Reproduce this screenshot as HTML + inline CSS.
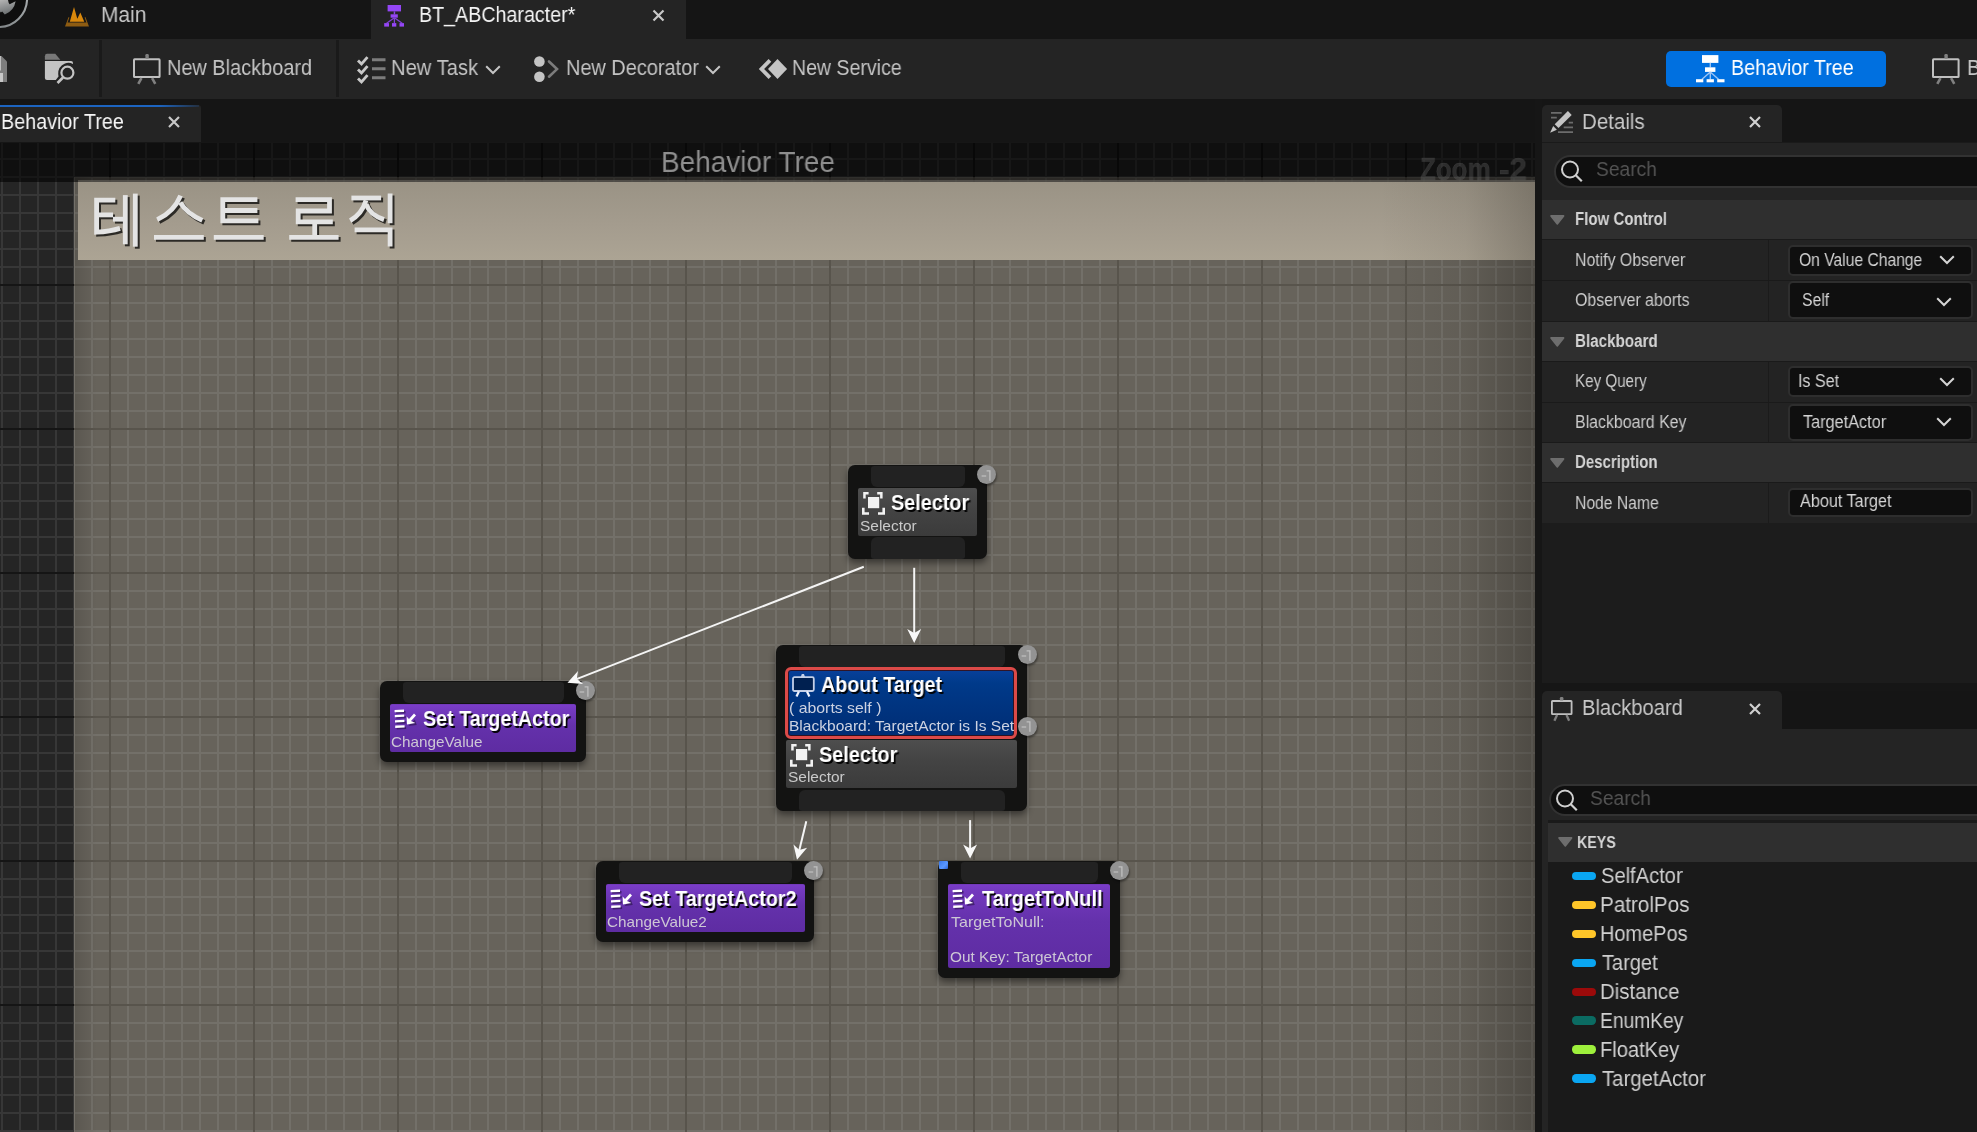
<!DOCTYPE html>
<html><head><meta charset="utf-8"><title>BT_ABCharacter</title>
<style>
html,body{margin:0;padding:0;width:1977px;height:1132px;overflow:hidden;background:#151515;font-family:"Liberation Sans",sans-serif;}
div,svg{font-family:"Liberation Sans",sans-serif;}
</style></head><body>
<div style="position:relative;width:1977px;height:1132px;overflow:hidden;">
<div style="position:absolute;left:0px;top:0px;width:1977px;height:39px;background:#151515;"></div>
<svg style="position:absolute;left:0px;top:0px;" width="40" height="39" viewBox="0 0 40 39">
<defs><linearGradient id="uel" x1="0" y1="0" x2="0.3" y2="1"><stop offset="0" stop-color="#b4b4b4"/><stop offset="1" stop-color="#6c7072"/></linearGradient>
<linearGradient id="uer" x1="1" y1="0" x2="0" y2="1"><stop offset="0" stop-color="#b8bcbe"/><stop offset="1" stop-color="#6e7476"/></linearGradient></defs>
<circle cx="-1.5" cy="-1.5" r="28.6" fill="#0e0e0e" stroke="url(#uer)" stroke-width="2.1"/>
<path d="M0 0 H8 Q8.6 3.6 9.6 4.2 L15.6 1.2 Q14.2 10.5 4.8 14.6 L2.2 11.4 L0.8 12.6 L0 11.6 Z" fill="url(#uel)"/>
</svg>
<svg style="position:absolute;left:60px;top:4px;" width="34" height="26" viewBox="0 0 34 26">
<path d="M5 22.6 L29 22.6 L25.4 13 L24.6 13.4 L26.4 18.6 L7.6 18.6 L9.4 13.4 L8.6 13 Z" fill="#8e5c12"/>
<path d="M9.8 17.8 L14 3.1 L17.3 14.8 L20.3 8.6 L24.3 17.8 Z" fill="#d9880c"/>
</svg>
<div style="position:absolute;left:371px;top:0px;width:315px;height:39px;background:#242424;"></div>
<svg style="position:absolute;left:380px;top:2px;" width="28" height="28" viewBox="0 0 28 28">
<rect x="7.6" y="3" width="13.4" height="6.4" fill="#9446f6"/>
<rect x="13.7" y="9.4" width="1.5" height="3" fill="#8a44e0"/>
<rect x="10.6" y="12.3" width="7.2" height="3.4" fill="#9446f6"/>
<path d="M14.4 15.7 L6.6 21.3 M14.4 15.7 L14.4 21.3 M14.4 15.7 L22.2 21.3" stroke="#8240d8" stroke-width="1.3" fill="none"/>
<rect x="4.2" y="21.1" width="4.8" height="3.5" fill="#9446f6"/>
<rect x="12" y="21.1" width="4.3" height="3.5" fill="#9446f6"/>
<rect x="19.5" y="21.1" width="4.5" height="3.5" fill="#9446f6"/>
</svg>
<svg style="position:absolute;left:650px;top:7px;" width="18" height="18" viewBox="0 0 18 18"><path d="M3.5 3.5 L13.5 13.5 M13.5 3.5 L3.5 13.5" stroke="#c8c8c8" stroke-width="2.2"/></svg>
<div style="position:absolute;left:0px;top:39px;width:1977px;height:60px;background:#242424;"></div>
<div style="position:absolute;left:99px;top:40px;width:3px;height:57px;background:#1a1a1a;"></div>
<div style="position:absolute;left:336px;top:40px;width:3px;height:57px;background:#1a1a1a;"></div>
<svg style="position:absolute;left:0px;top:54px;" width="10" height="30" viewBox="0 0 10 30">
<path d="M0 2 L1.5 2 L7 7.5 L7 28 L0 28 Z" fill="#7e7e7e"/>
<rect x="0" y="2" width="0.9" height="14.5" fill="#c8c8c8"/>
<rect x="0" y="19" width="3" height="9" fill="#c8c8c8"/>
</svg>
<svg style="position:absolute;left:40px;top:50px;" width="40" height="38" viewBox="0 0 40 38">
<path d="M4.9 6.2 Q4.9 3.8 7 3.8 L15.3 3.8 L20.3 9.7 L4.9 9.7 Z" fill="#787878"/>
<path d="M4.9 10.9 L31 10.9 Q33 11 33 13 L33 14 Q29 12 25 13.5 Q18 16.5 18.2 24 L18.5 26.5 L15.8 30 L7 30 Q4.9 30 4.9 28 Z" fill="#c4c4c4"/>
<circle cx="27.4" cy="22.7" r="6" fill="none" stroke="#c4c4c4" stroke-width="2.2"/>
<path d="M23 27.5 L17.5 33" stroke="#c4c4c4" stroke-width="2.6"/>
</svg>
<svg style="position:absolute;left:131.1px;top:52.8px;" width="31.599999999999994" height="31.900000000000006" viewBox="0 0 31.599999999999994 31.900000000000006"><rect x="3.00" y="6.30" width="25.60" height="17.80" fill="none" stroke="#c0c0c0" stroke-width="2.0" rx="0.6"/><rect x="14.40" y="1.00" width="3.40" height="4.80" rx="1.2" fill="#808080"/><path d="M10.50 25.10 L7.30 30.90 M21.10 25.10 L24.30 30.90" stroke="#808080" stroke-width="2.6"/></svg>
<svg style="position:absolute;left:354px;top:53px;" width="36" height="34" viewBox="0 0 36 34">
<path d="M4 7.4 L7.5 11 L13.5 4.1 M4 16.4 L7.5 20 L13.5 13.1 M4 25.4 L7.5 29 L13.5 22.1" stroke="#c8c8c8" stroke-width="2.8" fill="none"/>
<path d="M18 6.7 H31.5 M18 15.7 H31.5 M18 24.7 H31.5" stroke="#7c7c7c" stroke-width="3"/>
</svg>
<svg style="position:absolute;left:485.3px;top:64.7px;" width="16" height="10" viewBox="0 0 16 10"><path d="M1.2 1.2 L8 8 L14.8 1.2" stroke="#c4c4c4" stroke-width="2" fill="none"/></svg>
<svg style="position:absolute;left:530px;top:53px;" width="32" height="32" viewBox="0 0 32 32">
<circle cx="9.4" cy="8.5" r="5.3" fill="#c4c4c4"/>
<circle cx="9.4" cy="23.7" r="5.3" fill="#c4c4c4"/>
<path d="M19 8.5 L27 16.1 L19 23.7" stroke="#7c7c7c" stroke-width="2.6" stroke-linecap="round" fill="none"/>
</svg>
<svg style="position:absolute;left:705.3px;top:64.7px;" width="16" height="10" viewBox="0 0 16 10"><path d="M1.2 1.2 L8 8 L14.8 1.2" stroke="#c4c4c4" stroke-width="2" fill="none"/></svg>
<svg style="position:absolute;left:755px;top:55px;" width="36" height="28" viewBox="0 0 36 28">
<path d="M13.6 4 L3.8 14.1 L13.6 24 L16.3 21.3 L9.1 14.1 L16.3 6.7 Z" fill="#c4c4c4"/>
<path d="M22.5 4 L32.1 14.1 L22.5 24 L13 14.1 Z" fill="#c4c4c4"/>
</svg>
<div style="position:absolute;left:1666px;top:51px;width:220px;height:36px;background:#0070e0;border-radius:5px;"></div>
<svg style="position:absolute;left:1694px;top:53px;" width="34" height="32" viewBox="0 0 34 32">
<rect x="8" y="2.1" width="16.4" height="7.8" fill="#fff"/>
<rect x="15.6" y="9.9" width="1.4" height="4.4" fill="#9cc4f4"/>
<rect x="11" y="14.3" width="10.4" height="4.6" fill="#fff"/>
<path d="M16.3 19 L8 26.2 M16.3 19 L16.3 26.2 M16.3 19 L24.5 26.2" stroke="#9cc4f4" stroke-width="1.4" fill="none"/>
<rect x="2" y="26.2" width="7.3" height="3.1" fill="#fff"/>
<rect x="12.6" y="26.2" width="7.3" height="3.1" fill="#fff"/>
<rect x="23.2" y="26.2" width="7.3" height="3.1" fill="#fff"/>
</svg>
<svg style="position:absolute;left:1930.1px;top:52.8px;" width="31.600000000000136" height="31.900000000000006" viewBox="0 0 31.600000000000136 31.900000000000006"><rect x="3.00" y="6.30" width="25.60" height="17.80" fill="none" stroke="#c0c0c0" stroke-width="2.0" rx="0.6"/><rect x="14.40" y="1.00" width="3.40" height="4.80" rx="1.2" fill="#808080"/><path d="M10.50 25.10 L7.30 30.90 M21.10 25.10 L24.30 30.90" stroke="#808080" stroke-width="2.6"/></svg>
<div style="position:absolute;left:0px;top:99px;width:1977px;height:43px;background:#151515;"></div>
<div style="position:absolute;left:0px;top:105px;width:201px;height:37px;background:#242424;border-top-right-radius:3px;"></div>
<div style="position:absolute;left:0px;top:105px;width:199px;height:1.6px;background:linear-gradient(90deg,#1c64c0 0%,#1c64c0 80%,#243040 100%);"></div>
<svg style="position:absolute;left:164px;top:112px;" width="20" height="20" viewBox="0 0 20 20"><path d="M5 5 L15 15 M15 5 L5 15" stroke="#c8c8c8" stroke-width="2.2"/></svg>
<svg style="position:absolute;left:0px;top:142px" width="1535" height="990" viewBox="0 0 1535 990" shape-rendering="crispEdges"><defs><pattern id="gd" x="109" y="142" width="144" height="144" patternUnits="userSpaceOnUse"><rect width="144" height="144" fill="#252525"/><rect x="18" y="0" width="2" height="144" fill="#373737"/><rect x="0" y="18" width="144" height="2" fill="#373737"/><rect x="36" y="0" width="2" height="144" fill="#373737"/><rect x="0" y="36" width="144" height="2" fill="#373737"/><rect x="54" y="0" width="2" height="144" fill="#373737"/><rect x="0" y="54" width="144" height="2" fill="#373737"/><rect x="72" y="0" width="2" height="144" fill="#373737"/><rect x="0" y="72" width="144" height="2" fill="#373737"/><rect x="90" y="0" width="2" height="144" fill="#373737"/><rect x="0" y="90" width="144" height="2" fill="#373737"/><rect x="108" y="0" width="2" height="144" fill="#373737"/><rect x="0" y="108" width="144" height="2" fill="#373737"/><rect x="126" y="0" width="2" height="144" fill="#373737"/><rect x="0" y="126" width="144" height="2" fill="#373737"/><rect x="0" y="0" width="2" height="144" fill="#151515"/><rect x="0" y="0" width="144" height="2" fill="#151515"/></pattern><pattern id="gc" x="35" y="107" width="144" height="144" patternUnits="userSpaceOnUse"><rect width="144" height="144" fill="#67635b"/><rect x="18" y="0" width="2" height="144" fill="#737069"/><rect x="0" y="18" width="144" height="2" fill="#737069"/><rect x="36" y="0" width="2" height="144" fill="#737069"/><rect x="0" y="36" width="144" height="2" fill="#737069"/><rect x="54" y="0" width="2" height="144" fill="#737069"/><rect x="0" y="54" width="144" height="2" fill="#737069"/><rect x="72" y="0" width="2" height="144" fill="#737069"/><rect x="0" y="72" width="144" height="2" fill="#737069"/><rect x="90" y="0" width="2" height="144" fill="#737069"/><rect x="0" y="90" width="144" height="2" fill="#737069"/><rect x="108" y="0" width="2" height="144" fill="#737069"/><rect x="0" y="108" width="144" height="2" fill="#737069"/><rect x="126" y="0" width="2" height="144" fill="#737069"/><rect x="0" y="126" width="144" height="2" fill="#737069"/><rect x="0" y="0" width="2" height="144" fill="#58544c"/><rect x="0" y="0" width="144" height="2" fill="#58544c"/></pattern></defs><rect width="1535" height="990" fill="url(#gd)"/></svg>
<svg style="position:absolute;left:74px;top:177px" width="1461" height="955" viewBox="0 0 1461 955" shape-rendering="crispEdges"><defs><pattern id="gc2" x="35" y="107" width="144" height="144" patternUnits="userSpaceOnUse"><rect width="144" height="144" fill="#67635b"/><rect x="18" y="0" width="2" height="144" fill="#737069"/><rect x="0" y="18" width="144" height="2" fill="#737069"/><rect x="36" y="0" width="2" height="144" fill="#737069"/><rect x="0" y="36" width="144" height="2" fill="#737069"/><rect x="54" y="0" width="2" height="144" fill="#737069"/><rect x="0" y="54" width="144" height="2" fill="#737069"/><rect x="72" y="0" width="2" height="144" fill="#737069"/><rect x="0" y="72" width="144" height="2" fill="#737069"/><rect x="90" y="0" width="2" height="144" fill="#737069"/><rect x="0" y="90" width="144" height="2" fill="#737069"/><rect x="108" y="0" width="2" height="144" fill="#737069"/><rect x="0" y="108" width="144" height="2" fill="#737069"/><rect x="126" y="0" width="2" height="144" fill="#737069"/><rect x="0" y="126" width="144" height="2" fill="#737069"/><rect x="0" y="0" width="2" height="144" fill="#58544c"/><rect x="0" y="0" width="144" height="2" fill="#58544c"/></pattern></defs><rect width="1461" height="955" fill="url(#gc2)"/></svg>
<div style="position:absolute;left:75px;top:177px;width:22px;height:955px;background:linear-gradient(90deg,rgba(0,0,0,0.12),rgba(0,0,0,0.08) 35%,rgba(0,0,0,0));"></div>
<div style="position:absolute;left:1395px;top:260px;width:140px;height:872px;background:linear-gradient(90deg,rgba(20,18,15,0) 0%,rgba(20,18,15,0.07) 50%,rgba(20,18,15,0.30) 100%);"></div>
<div style="position:absolute;left:78px;top:182px;width:1457px;height:78px;background:linear-gradient(180deg,#9a9385 0%,#a49c8e 55%,#aca494 100%);"></div>
<div style="position:absolute;left:1380px;top:182px;width:155px;height:78px;background:linear-gradient(90deg,rgba(40,36,30,0) 0%,rgba(40,36,30,0.08) 55%,rgba(40,36,30,0.28) 100%);"></div>
<svg style="position:absolute;left:0px;top:0px;" width="420" height="260" viewBox="0 0 420 260"><g transform="translate(2,2)"><g fill="none" stroke="#2c2a26" stroke-width="4.8" stroke-linecap="butt" stroke-linejoin="miter">
<path d="M115.3 200.2 H96.6 V232.2 Q110 231.5 120 228.4"/>
<path d="M96.6 214.9 H113"/>
<path d="M113 219.2 H125"/>
<path d="M125.3 195.1 V244.3"/>
<path d="M135.3 193.6 V246.7"/>
<path d="M180.6 195.6 Q174 212 157.2 219.6"/>
<path d="M180.2 202.5 Q187 213.5 202.3 220.4"/>
<path d="M154 237.3 H203.8"/>
<path d="M257.4 199.6 H222.8 V220.8 H258.4"/>
<path d="M222.8 210.5 H257.4"/>
<path d="M213.8 237.3 H263.7"/>
<path d="M295.6 199.6 H329.5 V211 H298.2 V221.9 H332.8"/>
<path d="M314.7 221.9 V236"/>
<path d="M289.2 237.3 H338.6"/>
<path d="M351.4 198 H381.1"/>
<path d="M366 200.4 Q362 214 350.2 220.6"/>
<path d="M366 204 Q370 215 384 219.6"/>
<path d="M390.1 193.5 V223.2"/>
<path d="M354.6 229.9 H390.1 V246.6"/>
</g></g><g fill="none" stroke="#e4e4e4" stroke-width="4.8" stroke-linecap="butt" stroke-linejoin="miter">
<path d="M115.3 200.2 H96.6 V232.2 Q110 231.5 120 228.4"/>
<path d="M96.6 214.9 H113"/>
<path d="M113 219.2 H125"/>
<path d="M125.3 195.1 V244.3"/>
<path d="M135.3 193.6 V246.7"/>
<path d="M180.6 195.6 Q174 212 157.2 219.6"/>
<path d="M180.2 202.5 Q187 213.5 202.3 220.4"/>
<path d="M154 237.3 H203.8"/>
<path d="M257.4 199.6 H222.8 V220.8 H258.4"/>
<path d="M222.8 210.5 H257.4"/>
<path d="M213.8 237.3 H263.7"/>
<path d="M295.6 199.6 H329.5 V211 H298.2 V221.9 H332.8"/>
<path d="M314.7 221.9 V236"/>
<path d="M289.2 237.3 H338.6"/>
<path d="M351.4 198 H381.1"/>
<path d="M366 200.4 Q362 214 350.2 220.6"/>
<path d="M366 204 Q370 215 384 219.6"/>
<path d="M390.1 193.5 V223.2"/>
<path d="M354.6 229.9 H390.1 V246.6"/>
</g></svg>
<div style="position:absolute;left:0px;top:142px;width:1535px;height:40px;background:rgba(0,0,0,0.58);"></div>
<div style="position:absolute;left:78px;top:180.3px;width:1457px;height:1.7px;background:rgba(110,106,98,0.55);"></div>
<div style="position:absolute;left:0px;top:142px;width:1535px;height:1px;background:#161616;"></div>
<div style="position:absolute;left:848px;top:465px;width:139px;height:94px;background:#131312;border-radius:7px;box-shadow:0 4px 7px rgba(0,0,0,0.45);"></div>
<div style="position:absolute;left:871px;top:465.5px;width:94px;height:21.5px;background:#222222;border-radius:3px 3px 6px 6px;"></div>
<div style="position:absolute;left:858px;top:488px;width:119px;height:48px;background:linear-gradient(180deg,#4e4e4e 0%,#444 40%,#3b3b3b 100%);border-radius:2px;"></div>
<div style="position:absolute;left:871px;top:537px;width:94px;height:21.5px;background:#222222;border-radius:6px 6px 3px 3px;"></div>
<svg style="position:absolute;left:862px;top:492px;" width="24" height="24" viewBox="0 0 24 24"><g fill="#f2f2f2">
<rect x="6" y="5" width="11.2" height="11.2"/>
<path d="M1.2 0 H6.6 V2.5 H3.7 V6.6 H1.2 Z"/>
<path d="M15.2 0 H20.6 V6.6 H18.1 V2.5 H15.2 Z"/>
<path d="M0 15.7 H2.6 V20.3 H7 V22.8 H0 Z"/>
<path d="M16 20.3 H20.4 V15.7 H23 V22.8 H16 Z"/>
</g></svg>
<div style="position:absolute;left:977.2px;top:465.1px;width:19px;height:19px;border-radius:50%;background:#939393;box-shadow:1px 2px 2px rgba(0,0,0,0.35);"></div>
<svg style="position:absolute;left:977.5px;top:465.5px;" width="19" height="19" viewBox="0 0 19 19"><path d="M3.6 10 H8.2" stroke="#c0c0c0" stroke-width="1.2"/><path d="M8.6 4.9 H11.9 V14.8" stroke="#c0c0c0" stroke-width="1.3" fill="none"/></svg>
<div style="position:absolute;left:776px;top:645px;width:251px;height:166px;background:#131312;border-radius:7px;box-shadow:0 4px 7px rgba(0,0,0,0.45);"></div>
<div style="position:absolute;left:799px;top:645.5px;width:206px;height:21px;background:#222222;border-radius:3px 3px 6px 6px;"></div>
<div style="position:absolute;left:785px;top:667px;width:232.3px;height:72px;background:linear-gradient(180deg,#08409a 0%,#003a8a 20%,#003480 55%,#002d74 100%);border-radius:6px;border:3px solid #dc4a48;box-sizing:border-box;box-shadow:inset 0 0 0 1px rgba(60,10,10,0.8);"></div>
<svg style="position:absolute;left:790px;top:672px;" width="28" height="28" viewBox="0 0 28 28">
<rect x="3" y="5.2" width="20.8" height="13.8" rx="1.5" fill="#002050" stroke="#c4d0e8" stroke-width="1.8"/>
<path d="M11.8 2 L14 2 L15 5 L10.8 5 Z" fill="#c4d0e8"/>
<path d="M8.9 19.5 L6.5 24.4 M17 19.5 L19.4 24.4" stroke="#f0f4ff" stroke-width="2.2"/>
</svg>
<div style="position:absolute;left:786px;top:740px;width:231px;height:47.6px;background:linear-gradient(180deg,#4e4e4e 0%,#444 40%,#3b3b3b 100%);border-radius:2px;"></div>
<svg style="position:absolute;left:790px;top:744px;" width="24" height="24" viewBox="0 0 24 24"><g fill="#f2f2f2">
<rect x="6" y="5" width="11.2" height="11.2"/>
<path d="M1.2 0 H6.6 V2.5 H3.7 V6.6 H1.2 Z"/>
<path d="M15.2 0 H20.6 V6.6 H18.1 V2.5 H15.2 Z"/>
<path d="M0 15.7 H2.6 V20.3 H7 V22.8 H0 Z"/>
<path d="M16 20.3 H20.4 V15.7 H23 V22.8 H16 Z"/>
</g></svg>
<div style="position:absolute;left:799px;top:789.5px;width:206px;height:21px;background:#222222;border-radius:6px 6px 3px 3px;"></div>
<div style="position:absolute;left:1017.5px;top:645.2px;width:19px;height:19px;border-radius:50%;background:#939393;box-shadow:1px 2px 2px rgba(0,0,0,0.35);"></div>
<svg style="position:absolute;left:1017.8px;top:645.6px;" width="19" height="19" viewBox="0 0 19 19"><path d="M3.6 10 H8.2" stroke="#c0c0c0" stroke-width="1.2"/><path d="M8.6 4.9 H11.9 V14.8" stroke="#c0c0c0" stroke-width="1.3" fill="none"/></svg>
<div style="position:absolute;left:1017.5px;top:716.8000000000001px;width:19px;height:19px;border-radius:50%;background:#939393;box-shadow:1px 2px 2px rgba(0,0,0,0.35);"></div>
<svg style="position:absolute;left:1017.8px;top:717.2px;" width="19" height="19" viewBox="0 0 19 19"><path d="M3.6 10 H8.2" stroke="#c0c0c0" stroke-width="1.2"/><path d="M8.6 4.9 H11.9 V14.8" stroke="#c0c0c0" stroke-width="1.3" fill="none"/></svg>
<div style="position:absolute;left:380px;top:681px;width:206px;height:80.5px;background:#131312;border-radius:7px;box-shadow:0 4px 7px rgba(0,0,0,0.45);"></div>
<div style="position:absolute;left:403px;top:681.5px;width:161px;height:21px;background:#222222;border-radius:3px 3px 6px 6px;"></div>
<div style="position:absolute;left:390px;top:704px;width:186px;height:48px;background:linear-gradient(180deg,#6e38b4 0px,#7a3cc8 1.5px,#7339be 7px,#6431ab 45%,#5e2ca2 100%);border-radius:2px;"></div>
<svg style="position:absolute;left:393.5px;top:709px;" width="24" height="22" viewBox="0 0 24 22"><g transform="translate(1.5,1.5)" opacity="0.5"><g fill="#1a0b30">
<path d="M0.6 1 L10 0.6 V3 L0.6 3.3 Z"/><path d="M0.8 6 L10.2 5.5 V7.8 L0.8 8.3 Z"/><path d="M1 11.2 L10.4 10.8 V13.1 L1 13.5 Z"/><path d="M1.2 16.6 L10.6 16.2 V18.5 L1.2 18.9 Z"/>
<path d="M12.8 7.5 L14.6 13 L17 10.6 L20 13.6 L21.6 12 L18.6 9 L21 6.6 Z" transform="rotate(180 17 11)"/></g></g>
<g fill="#ffffff">
<path d="M0.6 1 L10 0.6 V3 L0.6 3.3 Z"/><path d="M0.8 6 L10.2 5.5 V7.8 L0.8 8.3 Z"/><path d="M1 11.2 L10.4 10.8 V13.1 L1 13.5 Z"/><path d="M1.2 16.6 L10.6 16.2 V18.5 L1.2 18.9 Z"/>
<path d="M13 15.5 L12.6 7.5 L15 10 L20 4.6 L22 6.6 L17 12 L21.4 13.9 Z"/>
</g></svg>
<div style="position:absolute;left:576.0px;top:681.3000000000001px;width:19px;height:19px;border-radius:50%;background:#939393;box-shadow:1px 2px 2px rgba(0,0,0,0.35);"></div>
<svg style="position:absolute;left:576.3px;top:681.7px;" width="19" height="19" viewBox="0 0 19 19"><path d="M3.6 10 H8.2" stroke="#c0c0c0" stroke-width="1.2"/><path d="M8.6 4.9 H11.9 V14.8" stroke="#c0c0c0" stroke-width="1.3" fill="none"/></svg>
<div style="position:absolute;left:596px;top:861px;width:218px;height:81px;background:#131312;border-radius:7px;box-shadow:0 4px 7px rgba(0,0,0,0.45);"></div>
<div style="position:absolute;left:619px;top:861.5px;width:173px;height:21px;background:#222222;border-radius:3px 3px 6px 6px;"></div>
<div style="position:absolute;left:606px;top:884px;width:198.5px;height:48px;background:linear-gradient(180deg,#6e38b4 0px,#7a3cc8 1.5px,#7339be 7px,#6431ab 45%,#5e2ca2 100%);border-radius:2px;"></div>
<svg style="position:absolute;left:609.5px;top:889px;" width="24" height="22" viewBox="0 0 24 22"><g transform="translate(1.5,1.5)" opacity="0.5"><g fill="#1a0b30">
<path d="M0.6 1 L10 0.6 V3 L0.6 3.3 Z"/><path d="M0.8 6 L10.2 5.5 V7.8 L0.8 8.3 Z"/><path d="M1 11.2 L10.4 10.8 V13.1 L1 13.5 Z"/><path d="M1.2 16.6 L10.6 16.2 V18.5 L1.2 18.9 Z"/>
<path d="M12.8 7.5 L14.6 13 L17 10.6 L20 13.6 L21.6 12 L18.6 9 L21 6.6 Z" transform="rotate(180 17 11)"/></g></g>
<g fill="#ffffff">
<path d="M0.6 1 L10 0.6 V3 L0.6 3.3 Z"/><path d="M0.8 6 L10.2 5.5 V7.8 L0.8 8.3 Z"/><path d="M1 11.2 L10.4 10.8 V13.1 L1 13.5 Z"/><path d="M1.2 16.6 L10.6 16.2 V18.5 L1.2 18.9 Z"/>
<path d="M13 15.5 L12.6 7.5 L15 10 L20 4.6 L22 6.6 L17 12 L21.4 13.9 Z"/>
</g></svg>
<div style="position:absolute;left:804.2px;top:861.2px;width:19px;height:19px;border-radius:50%;background:#939393;box-shadow:1px 2px 2px rgba(0,0,0,0.35);"></div>
<svg style="position:absolute;left:804.5px;top:861.6px;" width="19" height="19" viewBox="0 0 19 19"><path d="M3.6 10 H8.2" stroke="#c0c0c0" stroke-width="1.2"/><path d="M8.6 4.9 H11.9 V14.8" stroke="#c0c0c0" stroke-width="1.3" fill="none"/></svg>
<div style="position:absolute;left:938px;top:861px;width:182px;height:116.5px;background:#131312;border-radius:7px;box-shadow:0 4px 7px rgba(0,0,0,0.45);"></div>
<div style="position:absolute;left:961px;top:861.5px;width:137px;height:21px;background:#222222;border-radius:3px 3px 6px 6px;"></div>
<div style="position:absolute;left:948.3px;top:884px;width:161.6px;height:83.7px;background:linear-gradient(180deg,#6e38b4 0px,#7a3cc8 1.5px,#7339be 7px,#6431ab 45%,#5e2ca2 100%);border-radius:2px;"></div>
<svg style="position:absolute;left:951.5px;top:889px;" width="24" height="22" viewBox="0 0 24 22"><g transform="translate(1.5,1.5)" opacity="0.5"><g fill="#1a0b30">
<path d="M0.6 1 L10 0.6 V3 L0.6 3.3 Z"/><path d="M0.8 6 L10.2 5.5 V7.8 L0.8 8.3 Z"/><path d="M1 11.2 L10.4 10.8 V13.1 L1 13.5 Z"/><path d="M1.2 16.6 L10.6 16.2 V18.5 L1.2 18.9 Z"/>
<path d="M12.8 7.5 L14.6 13 L17 10.6 L20 13.6 L21.6 12 L18.6 9 L21 6.6 Z" transform="rotate(180 17 11)"/></g></g>
<g fill="#ffffff">
<path d="M0.6 1 L10 0.6 V3 L0.6 3.3 Z"/><path d="M0.8 6 L10.2 5.5 V7.8 L0.8 8.3 Z"/><path d="M1 11.2 L10.4 10.8 V13.1 L1 13.5 Z"/><path d="M1.2 16.6 L10.6 16.2 V18.5 L1.2 18.9 Z"/>
<path d="M13 15.5 L12.6 7.5 L15 10 L20 4.6 L22 6.6 L17 12 L21.4 13.9 Z"/>
</g></svg>
<div style="position:absolute;left:939.3px;top:861.4px;width:8.6px;height:8.1px;background:linear-gradient(135deg,#3a78e8,#5a98ff 60%,#2a60d0);border-radius:1px;"></div>
<div style="position:absolute;left:1110.0px;top:861.1px;width:19px;height:19px;border-radius:50%;background:#939393;box-shadow:1px 2px 2px rgba(0,0,0,0.35);"></div>
<svg style="position:absolute;left:1110.3px;top:861.5px;" width="19" height="19" viewBox="0 0 19 19"><path d="M3.6 10 H8.2" stroke="#c0c0c0" stroke-width="1.2"/><path d="M8.6 4.9 H11.9 V14.8" stroke="#c0c0c0" stroke-width="1.3" fill="none"/></svg>
<svg style="position:absolute;left:0px;top:0px;pointer-events:none;" width="1535" height="1132" viewBox="0 0 1535 1132"><path d="M914.20 567.80 L914.20 634.00" stroke="#f4f4f4" stroke-width="2"/><path d="M914.20 643.00 L907.20 629.00 L914.20 633.00 L921.20 629.00 Z" fill="#f8f8f8"/><path d="M863.80 566.70 L575.88 679.42" stroke="#f4f4f4" stroke-width="2"/><path d="M567.50 682.70 L577.98 671.08 L576.81 679.05 L583.09 684.11 Z" fill="#f8f8f8"/><path d="M806.30 821.30 L799.12 850.95" stroke="#f4f4f4" stroke-width="2"/><path d="M797.00 859.70 L793.49 844.45 L799.35 849.98 L807.10 847.74 Z" fill="#f8f8f8"/><path d="M970.10 820.10 L970.10 849.50" stroke="#f4f4f4" stroke-width="2"/><path d="M970.10 858.50 L963.10 844.50 L970.10 848.50 L977.10 844.50 Z" fill="#f8f8f8"/></svg>
<div style="position:absolute;left:1535px;top:99px;width:7px;height:1033px;background:#161616;"></div>
<div style="position:absolute;left:1542px;top:105px;width:240px;height:37px;background:#242424;border-radius:5px 5px 0 0;"></div>
<svg style="position:absolute;left:1547px;top:108px;" width="30" height="28" viewBox="0 0 30 28">
<path d="M4 4.9 H14.7 M4 9.7 H9.8 M21.7 14.6 H26 M16.7 19.4 H26 M11 24.2 H26" stroke="#6c6c6c" stroke-width="1.8"/>
<path d="M20.9 3 L24.7 6.9 L11.5 20 L7.7 16.3 Z" fill="#c4c4c4"/>
<path d="M6.2 18 L9.9 21.7 L3.1 24.8 Z" fill="#c4c4c4"/>
</svg>
<svg style="position:absolute;left:1745px;top:112px;" width="20" height="20" viewBox="0 0 20 20"><path d="M5 5 L15 15 M15 5 L5 15" stroke="#d0d0d0" stroke-width="2.2"/></svg>
<div style="position:absolute;left:1542px;top:142px;width:435px;height:1px;background:#1a1a1a;"></div>
<div style="position:absolute;left:1542px;top:143px;width:435px;height:57px;background:#242424;"></div>
<div style="position:absolute;left:1554.3px;top:155px;width:500px;height:32.7px;background:#0f0f0f;border:2px solid #323232;box-sizing:border-box;border-radius:16.35px;"></div>
<svg style="position:absolute;left:1559.3px;top:158px;" width="26" height="26" viewBox="0 0 26 26"><circle cx="11" cy="11.5" r="8" fill="none" stroke="#d0d0d0" stroke-width="2"/><path d="M16.8 17.3 L22.8 23.3" stroke="#d0d0d0" stroke-width="2.2"/></svg>
<div style="position:absolute;left:1542px;top:199.5px;width:435px;height:1px;background:#1f1f1f;"></div>
<div style="position:absolute;left:1542px;top:200px;width:435px;height:39px;background:#2f2f2f;"></div>
<svg style="position:absolute;left:1548.5px;top:213.7px;" width="17" height="12" viewBox="0 0 17 12"><path d="M2 1.9 L14.6 1.9 L8.3 9.9 Z" fill="#6e6e6e" stroke="#6e6e6e" stroke-width="1.6" stroke-linejoin="round"/></svg>
<div style="position:absolute;left:1542px;top:239px;width:435px;height:1px;background:#1a1a1a;"></div>
<div style="position:absolute;left:1542px;top:240px;width:435px;height:40px;background:#232323;"></div>
<div style="position:absolute;left:1767.5px;top:240px;width:1.5px;height:40px;background:#1b1b1b;"></div>
<div style="position:absolute;left:1787.5px;top:244.5px;width:185.8px;height:31.899999999999977px;background:#0f0f0f;border:2px solid #2e2e2e;box-sizing:border-box;border-radius:5px;"></div>
<svg style="position:absolute;left:1939.2px;top:255.4px;" width="17" height="11" viewBox="0 0 17 11"><path d="M1.2 1.2 L8 8 L14.8 1.2" stroke="#d4d4d4" stroke-width="2.0" fill="none"/></svg>
<div style="position:absolute;left:1542px;top:280px;width:435px;height:1px;background:#1a1a1a;"></div>
<div style="position:absolute;left:1542px;top:281px;width:435px;height:40px;background:#232323;"></div>
<div style="position:absolute;left:1767.5px;top:281px;width:1.5px;height:40px;background:#1b1b1b;"></div>
<div style="position:absolute;left:1787.5px;top:281.4px;width:185.8px;height:37.80000000000001px;background:#0f0f0f;border:2px solid #2e2e2e;box-sizing:border-box;border-radius:5px;"></div>
<svg style="position:absolute;left:1936.2px;top:296.7px;" width="17" height="11" viewBox="0 0 17 11"><path d="M1.2 1.2 L8 8 L14.8 1.2" stroke="#d4d4d4" stroke-width="2.0" fill="none"/></svg>
<div style="position:absolute;left:1542px;top:321px;width:435px;height:1px;background:#1a1a1a;"></div>
<div style="position:absolute;left:1542px;top:322px;width:435px;height:39px;background:#2f2f2f;"></div>
<svg style="position:absolute;left:1548.5px;top:335.7px;" width="17" height="12" viewBox="0 0 17 12"><path d="M2 1.9 L14.6 1.9 L8.3 9.9 Z" fill="#6e6e6e" stroke="#6e6e6e" stroke-width="1.6" stroke-linejoin="round"/></svg>
<div style="position:absolute;left:1542px;top:361px;width:435px;height:1px;background:#1a1a1a;"></div>
<div style="position:absolute;left:1542px;top:362px;width:435px;height:40px;background:#232323;"></div>
<div style="position:absolute;left:1767.5px;top:362px;width:1.5px;height:40px;background:#1b1b1b;"></div>
<div style="position:absolute;left:1787.5px;top:366px;width:185.8px;height:30.80000000000001px;background:#0f0f0f;border:2px solid #2e2e2e;box-sizing:border-box;border-radius:5px;"></div>
<svg style="position:absolute;left:1939.2px;top:377.4px;" width="17" height="11" viewBox="0 0 17 11"><path d="M1.2 1.2 L8 8 L14.8 1.2" stroke="#d4d4d4" stroke-width="2.0" fill="none"/></svg>
<div style="position:absolute;left:1542px;top:402px;width:435px;height:1px;background:#1a1a1a;"></div>
<div style="position:absolute;left:1542px;top:403px;width:435px;height:39px;background:#232323;"></div>
<div style="position:absolute;left:1767.5px;top:403px;width:1.5px;height:39px;background:#1b1b1b;"></div>
<div style="position:absolute;left:1787.5px;top:403.5px;width:185.8px;height:37.60000000000002px;background:#0f0f0f;border:2px solid #2e2e2e;box-sizing:border-box;border-radius:5px;"></div>
<svg style="position:absolute;left:1936.2px;top:417.2px;" width="17" height="11" viewBox="0 0 17 11"><path d="M1.2 1.2 L8 8 L14.8 1.2" stroke="#d4d4d4" stroke-width="2.0" fill="none"/></svg>
<div style="position:absolute;left:1542px;top:442px;width:435px;height:1px;background:#1a1a1a;"></div>
<div style="position:absolute;left:1542px;top:443px;width:435px;height:39px;background:#2f2f2f;"></div>
<svg style="position:absolute;left:1548.5px;top:456.7px;" width="17" height="12" viewBox="0 0 17 12"><path d="M2 1.9 L14.6 1.9 L8.3 9.9 Z" fill="#6e6e6e" stroke="#6e6e6e" stroke-width="1.6" stroke-linejoin="round"/></svg>
<div style="position:absolute;left:1542px;top:482px;width:435px;height:1px;background:#1a1a1a;"></div>
<div style="position:absolute;left:1542px;top:483px;width:435px;height:40px;background:#232323;"></div>
<div style="position:absolute;left:1767.5px;top:483px;width:1.5px;height:40px;background:#1b1b1b;"></div>
<div style="position:absolute;left:1787.5px;top:488.4px;width:185.8px;height:28.5px;background:#0f0f0f;border:2px solid #2e2e2e;box-sizing:border-box;border-radius:5px;"></div>
<div style="position:absolute;left:1542px;top:523px;width:435px;height:160px;background:#1c1c1c;"></div>
<div style="position:absolute;left:1542px;top:683px;width:435px;height:8px;background:#161616;"></div>
<div style="position:absolute;left:1542px;top:691px;width:240px;height:38px;background:#242424;border-radius:5px 5px 0 0;"></div>
<svg style="position:absolute;left:1549.3px;top:695.8px;" width="25.5" height="25.800000000000068" viewBox="0 0 25.5 25.800000000000068"><rect x="2.90" y="5.00" width="19.70" height="13.20" fill="none" stroke="#c0c0c0" stroke-width="1.8" rx="0.6"/><rect x="10.90" y="1.00" width="3.50" height="3.60" rx="1.2" fill="#808080"/><path d="M8.10 19.10 L5.40 24.80 M17.50 19.10 L20.10 24.80" stroke="#808080" stroke-width="2.3"/></svg>
<svg style="position:absolute;left:1745px;top:699px;" width="20" height="20" viewBox="0 0 20 20"><path d="M5 5 L15 15 M15 5 L5 15" stroke="#d0d0d0" stroke-width="2.2"/></svg>
<div style="position:absolute;left:1542px;top:729px;width:435px;height:403px;background:#242424;"></div>
<div style="position:absolute;left:1549px;top:783.8px;width:500px;height:32.3px;background:#0f0f0f;border:2px solid #323232;box-sizing:border-box;border-radius:16.15px;"></div>
<svg style="position:absolute;left:1554px;top:786.8px;" width="26" height="26" viewBox="0 0 26 26"><circle cx="11" cy="11.5" r="8" fill="none" stroke="#d0d0d0" stroke-width="2"/><path d="M16.8 17.3 L22.8 23.3" stroke="#d0d0d0" stroke-width="2.2"/></svg>
<div style="position:absolute;left:1548px;top:820px;width:429px;height:3px;background:#1a1a1a;"></div>
<div style="position:absolute;left:1548px;top:823px;width:429px;height:39px;background:#2f2f2f;"></div>
<svg style="position:absolute;left:1556.5px;top:836px;" width="17" height="12" viewBox="0 0 17 12"><path d="M2 1.9 L14.6 1.9 L8.3 9.9 Z" fill="#6e6e6e" stroke="#6e6e6e" stroke-width="1.6" stroke-linejoin="round"/></svg>
<div style="position:absolute;left:1548px;top:862px;width:429px;height:270px;background:#1a1a1a;"></div>
<div style="position:absolute;left:1572px;top:871.8px;width:24px;height:8.4px;background:#0aa6f2;border-radius:4.2px;"></div>
<div style="position:absolute;left:1572px;top:900.7299999999999px;width:24px;height:8.4px;background:#ffc629;border-radius:4.2px;"></div>
<div style="position:absolute;left:1572px;top:929.66px;width:24px;height:8.4px;background:#ffc629;border-radius:4.2px;"></div>
<div style="position:absolute;left:1572px;top:958.5899999999999px;width:24px;height:8.4px;background:#0aa6f2;border-radius:4.2px;"></div>
<div style="position:absolute;left:1572px;top:987.52px;width:24px;height:8.4px;background:#9c0a0a;border-radius:4.2px;"></div>
<div style="position:absolute;left:1572px;top:1016.4499999999999px;width:24px;height:8.4px;background:#0b6b62;border-radius:4.2px;"></div>
<div style="position:absolute;left:1572px;top:1045.3799999999999px;width:24px;height:8.4px;background:#9ef03c;border-radius:4.2px;"></div>
<div style="position:absolute;left:1572px;top:1074.31px;width:24px;height:8.4px;background:#0aa6f2;border-radius:4.2px;"></div>
<div style="position:absolute;left:101.30px;top:4.00px;font-size:22px;line-height:22px;font-weight:400;color:#c8c8c8;white-space:pre;transform:scaleX(0.9523);transform-origin:0 0;will-change:transform;">Main</div>
<div style="position:absolute;left:419.41px;top:4.00px;font-size:22px;line-height:22px;font-weight:400;color:#f4f4f4;white-space:pre;transform:scaleX(0.8942);transform-origin:0 0;will-change:transform;">BT_ABCharacter*</div>
<div style="position:absolute;left:167.39px;top:57.00px;font-size:22px;line-height:22px;font-weight:400;color:#c4c4c4;white-space:pre;transform:scaleX(0.9051);transform-origin:0 0;will-change:transform;">New Blackboard</div>
<div style="position:absolute;left:391.47px;top:57.00px;font-size:22px;line-height:22px;font-weight:400;color:#c4c4c4;white-space:pre;transform:scaleX(0.9172);transform-origin:0 0;will-change:transform;">New Task</div>
<div style="position:absolute;left:566.29px;top:57.00px;font-size:22px;line-height:22px;font-weight:400;color:#c4c4c4;white-space:pre;transform:scaleX(0.9055);transform-origin:0 0;will-change:transform;">New Decorator</div>
<div style="position:absolute;left:792.22px;top:57.00px;font-size:22px;line-height:22px;font-weight:400;color:#c4c4c4;white-space:pre;transform:scaleX(0.8884);transform-origin:0 0;will-change:transform;">New Service</div>
<div style="position:absolute;left:1731.21px;top:57.00px;font-size:22px;line-height:22px;font-weight:400;color:#ffffff;white-space:pre;transform:scaleX(0.8955);transform-origin:0 0;will-change:transform;">Behavior Tree</div>
<div style="position:absolute;left:1966.66px;top:57.00px;font-size:22px;line-height:22px;font-weight:400;color:#c4c4c4;white-space:pre;transform:scaleX(0.9200);transform-origin:0 0;will-change:transform;">B</div>
<div style="position:absolute;left:1.41px;top:111.00px;font-size:22px;line-height:22px;font-weight:400;color:#f6f6f6;white-space:pre;transform:scaleX(0.8963);transform-origin:0 0;will-change:transform;">Behavior Tree</div>
<div style="position:absolute;left:660.99px;top:148.00px;font-size:29.2px;line-height:29.2px;font-weight:400;color:#8e8e8e;white-space:pre;transform:scaleX(0.9570);transform-origin:0 0;will-change:transform;">Behavior Tree</div>
<div style="position:absolute;left:1420.19px;top:153.00px;font-size:32px;line-height:32px;font-weight:700;color:rgba(105,105,105,0.34);white-space:pre;transform:scaleX(0.8095);transform-origin:0 0;will-change:transform;-webkit-text-stroke:0.5px rgba(105,105,105,0.34);">Zoom</div>
<div style="position:absolute;left:1499.02px;top:153.00px;font-size:32px;line-height:32px;font-weight:700;color:rgba(105,105,105,0.34);white-space:pre;transform:scaleX(0.9769);transform-origin:0 0;will-change:transform;-webkit-text-stroke:0.5px rgba(105,105,105,0.34);">-2</div>
<div style="position:absolute;left:891.08px;top:493.00px;font-size:21.5px;line-height:21.5px;font-weight:700;color:#ffffff;white-space:pre;transform:scaleX(0.9214);transform-origin:0 0;will-change:transform;text-shadow:1.8px 1.8px 0.5px rgba(0,0,0,0.95);">Selector</div>
<div style="position:absolute;left:859.64px;top:519.00px;font-size:14.6px;line-height:14.6px;font-weight:400;color:#cacaca;white-space:pre;transform:scaleX(1.0596);transform-origin:0 0;will-change:transform;">Selector</div>
<div style="position:absolute;left:820.78px;top:675.00px;font-size:21.5px;line-height:21.5px;font-weight:700;color:#ffffff;white-space:pre;transform:scaleX(0.9160);transform-origin:0 0;will-change:transform;text-shadow:1.8px 1.8px 0.5px rgba(0,0,0,0.95);">About Target</div>
<div style="position:absolute;left:789.31px;top:701.00px;font-size:14.6px;line-height:14.6px;font-weight:400;color:#cdd3e2;white-space:pre;transform:scaleX(1.0855);transform-origin:0 0;will-change:transform;">( aborts self )</div>
<div style="position:absolute;left:789.34px;top:719.00px;font-size:14.6px;line-height:14.6px;font-weight:400;color:#cdd3e2;white-space:pre;transform:scaleX(1.0648);transform-origin:0 0;will-change:transform;">Blackboard: TargetActor is Is Set</div>
<div style="position:absolute;left:818.68px;top:745.00px;font-size:21.5px;line-height:21.5px;font-weight:700;color:#ffffff;white-space:pre;transform:scaleX(0.9238);transform-origin:0 0;will-change:transform;text-shadow:1.8px 1.8px 0.5px rgba(0,0,0,0.95);">Selector</div>
<div style="position:absolute;left:787.74px;top:770.00px;font-size:14.6px;line-height:14.6px;font-weight:400;color:#cacaca;white-space:pre;transform:scaleX(1.0596);transform-origin:0 0;will-change:transform;">Selector</div>
<div style="position:absolute;left:422.98px;top:709.00px;font-size:21.5px;line-height:21.5px;font-weight:700;color:#ffffff;white-space:pre;transform:scaleX(0.9165);transform-origin:0 0;will-change:transform;text-shadow:1.8px 1.8px 0.5px rgba(0,0,0,0.95);">Set TargetActor</div>
<div style="position:absolute;left:391.45px;top:735.00px;font-size:14.6px;line-height:14.6px;font-weight:400;color:#cdc7d5;white-space:pre;transform:scaleX(1.0477);transform-origin:0 0;will-change:transform;">ChangeValue</div>
<div style="position:absolute;left:638.88px;top:889.00px;font-size:21.5px;line-height:21.5px;font-weight:700;color:#ffffff;white-space:pre;transform:scaleX(0.9176);transform-origin:0 0;will-change:transform;text-shadow:1.8px 1.8px 0.5px rgba(0,0,0,0.95);">Set TargetActor2</div>
<div style="position:absolute;left:607.45px;top:915.00px;font-size:14.6px;line-height:14.6px;font-weight:400;color:#cdc7d5;white-space:pre;transform:scaleX(1.0457);transform-origin:0 0;will-change:transform;">ChangeValue2</div>
<div style="position:absolute;left:982.00px;top:889.00px;font-size:21.5px;line-height:21.5px;font-weight:700;color:#ffffff;white-space:pre;transform:scaleX(0.9320);transform-origin:0 0;will-change:transform;text-shadow:1.8px 1.8px 0.5px rgba(0,0,0,0.95);">TargetToNull</div>
<div style="position:absolute;left:951.00px;top:915.00px;font-size:14.6px;line-height:14.6px;font-weight:400;color:#cdc7d5;white-space:pre;transform:scaleX(1.0976);transform-origin:0 0;will-change:transform;">TargetToNull:</div>
<div style="position:absolute;left:949.95px;top:950.00px;font-size:14.6px;line-height:14.6px;font-weight:400;color:#cdc7d5;white-space:pre;transform:scaleX(1.0522);transform-origin:0 0;will-change:transform;">Out Key: TargetActor</div>
<div style="position:absolute;left:1582.34px;top:111.00px;font-size:22px;line-height:22px;font-weight:400;color:#c8c8c8;white-space:pre;transform:scaleX(0.9323);transform-origin:0 0;will-change:transform;">Details</div>
<div style="position:absolute;left:1595.96px;top:159.00px;font-size:20.5px;line-height:20.5px;font-weight:400;color:#545454;white-space:pre;transform:scaleX(0.9381);transform-origin:0 0;will-change:transform;">Search</div>
<div style="position:absolute;left:1574.66px;top:210.00px;font-size:18px;line-height:18px;font-weight:700;color:#d4d4d4;white-space:pre;transform:scaleX(0.8361);transform-origin:0 0;will-change:transform;">Flow Control</div>
<div style="position:absolute;left:1574.59px;top:252.00px;font-size:17.5px;line-height:17.5px;font-weight:400;color:#cccccc;white-space:pre;transform:scaleX(0.9067);transform-origin:0 0;will-change:transform;">Notify Observer</div>
<div style="position:absolute;left:1798.51px;top:252.00px;font-size:17.5px;line-height:17.5px;font-weight:400;color:#d4d4d4;white-space:pre;transform:scaleX(0.8941);transform-origin:0 0;will-change:transform;">On Value Change</div>
<div style="position:absolute;left:1574.59px;top:292.00px;font-size:17.5px;line-height:17.5px;font-weight:400;color:#cccccc;white-space:pre;transform:scaleX(0.9129);transform-origin:0 0;will-change:transform;">Observer aborts</div>
<div style="position:absolute;left:1801.80px;top:292.00px;font-size:17.5px;line-height:17.5px;font-weight:400;color:#d4d4d4;white-space:pre;transform:scaleX(0.9000);transform-origin:0 0;will-change:transform;">Self</div>
<div style="position:absolute;left:1574.66px;top:332.00px;font-size:18px;line-height:18px;font-weight:700;color:#d4d4d4;white-space:pre;transform:scaleX(0.8438);transform-origin:0 0;will-change:transform;">Blackboard</div>
<div style="position:absolute;left:1574.63px;top:373.00px;font-size:17.5px;line-height:17.5px;font-weight:400;color:#cccccc;white-space:pre;transform:scaleX(0.8671);transform-origin:0 0;will-change:transform;">Key Query</div>
<div style="position:absolute;left:1797.67px;top:373.00px;font-size:17.5px;line-height:17.5px;font-weight:400;color:#d4d4d4;white-space:pre;transform:scaleX(0.9163);transform-origin:0 0;will-change:transform;">Is Set</div>
<div style="position:absolute;left:1574.59px;top:414.00px;font-size:17.5px;line-height:17.5px;font-weight:400;color:#cccccc;white-space:pre;transform:scaleX(0.9099);transform-origin:0 0;will-change:transform;">Blackboard Key</div>
<div style="position:absolute;left:1802.50px;top:414.00px;font-size:17.5px;line-height:17.5px;font-weight:400;color:#d4d4d4;white-space:pre;transform:scaleX(0.9281);transform-origin:0 0;will-change:transform;">TargetActor</div>
<div style="position:absolute;left:1574.67px;top:453.00px;font-size:18px;line-height:18px;font-weight:700;color:#d4d4d4;white-space:pre;transform:scaleX(0.8340);transform-origin:0 0;will-change:transform;">Description</div>
<div style="position:absolute;left:1574.60px;top:495.00px;font-size:17.5px;line-height:17.5px;font-weight:400;color:#cccccc;white-space:pre;transform:scaleX(0.8967);transform-origin:0 0;will-change:transform;">Node Name</div>
<div style="position:absolute;left:1800.30px;top:493.00px;font-size:17.5px;line-height:17.5px;font-weight:400;color:#d4d4d4;white-space:pre;transform:scaleX(0.9253);transform-origin:0 0;will-change:transform;">About Target</div>
<div style="position:absolute;left:1582.37px;top:697.00px;font-size:22px;line-height:22px;font-weight:400;color:#c8c8c8;white-space:pre;transform:scaleX(0.9168);transform-origin:0 0;will-change:transform;">Blackboard</div>
<div style="position:absolute;left:1589.76px;top:788.00px;font-size:20.5px;line-height:20.5px;font-weight:400;color:#545454;white-space:pre;transform:scaleX(0.9381);transform-origin:0 0;will-change:transform;">Search</div>
<div style="position:absolute;left:1576.86px;top:834.00px;font-size:17px;line-height:17px;font-weight:700;color:#d4d4d4;white-space:pre;transform:scaleX(0.8378);transform-origin:0 0;will-change:transform;">KEYS</div>
<div style="position:absolute;left:1600.85px;top:865.00px;font-size:21.2px;line-height:21.2px;font-weight:400;color:#d0d0d0;white-space:pre;transform:scaleX(0.9494);transform-origin:0 0;will-change:transform;">SelfActor</div>
<div style="position:absolute;left:1599.85px;top:894.00px;font-size:21.2px;line-height:21.2px;font-weight:400;color:#d0d0d0;white-space:pre;transform:scaleX(0.9742);transform-origin:0 0;will-change:transform;">PatrolPos</div>
<div style="position:absolute;left:1599.92px;top:923.00px;font-size:21.2px;line-height:21.2px;font-weight:400;color:#d0d0d0;white-space:pre;transform:scaleX(0.9411);transform-origin:0 0;will-change:transform;">HomePos</div>
<div style="position:absolute;left:1601.80px;top:952.00px;font-size:21.2px;line-height:21.2px;font-weight:400;color:#d0d0d0;white-space:pre;transform:scaleX(0.9424);transform-origin:0 0;will-change:transform;">Target</div>
<div style="position:absolute;left:1599.87px;top:981.00px;font-size:21.2px;line-height:21.2px;font-weight:400;color:#d0d0d0;white-space:pre;transform:scaleX(0.9638);transform-origin:0 0;will-change:transform;">Distance</div>
<div style="position:absolute;left:1599.99px;top:1010.00px;font-size:21.2px;line-height:21.2px;font-weight:400;color:#d0d0d0;white-space:pre;transform:scaleX(0.9067);transform-origin:0 0;will-change:transform;">EnumKey</div>
<div style="position:absolute;left:1599.91px;top:1039.00px;font-size:21.2px;line-height:21.2px;font-weight:400;color:#d0d0d0;white-space:pre;transform:scaleX(0.9469);transform-origin:0 0;will-change:transform;">FloatKey</div>
<div style="position:absolute;left:1601.80px;top:1068.00px;font-size:21.2px;line-height:21.2px;font-weight:400;color:#d0d0d0;white-space:pre;transform:scaleX(0.9593);transform-origin:0 0;will-change:transform;">TargetActor</div>
</div></body></html>
